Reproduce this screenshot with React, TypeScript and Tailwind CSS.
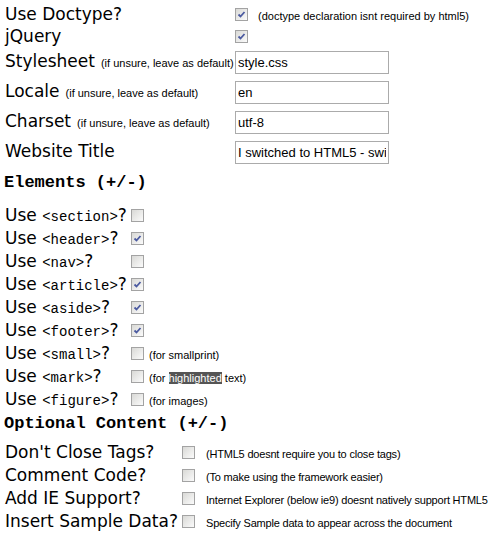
const verdana = "font-['DejaVu_Sans',sans-serif]";
const tahoma = "font-['Liberation_Sans',Arial,sans-serif]";
const mono = "font-['Liberation_Mono','Courier_New',monospace]";

function Box({ checked }: { checked?: boolean }) {
  return (
    <span className="inline-flex h-[13px] w-[13px] shrink-0 items-center justify-center border border-[#a3a3a3] bg-gradient-to-br from-[#d9d9d6] to-[#fbfbfb]">
      {checked && (
        <svg width="9" height="9" viewBox="0 0 9 9">
          <path
            d="M1.5 4.5 L3.5 6.5 L7.5 2"
            fill="none"
            stroke="#4b5aa0"
            strokeWidth="1.8"
          />
        </svg>
      )}
    </span>
  );
}

function Note({ children, tight }: { children: React.ReactNode; tight?: boolean }) {
  return (
    <span
      className={`${tahoma} whitespace-nowrap text-[11px] text-black ${tight ? "tracking-[-0.2px]" : ""}`}
    >
      {children}
    </span>
  );
}

function TextBox({ value }: { value: string }) {
  return (
    <input
      readOnly
      defaultValue={value}
      className={`${tahoma} h-[23px] w-[154px] border border-[#ababab] bg-white px-[2px] text-[13px] text-black outline-none`}
    />
  );
}

const elements = [
  { tag: "<section>", checked: false },
  { tag: "<header>", checked: true },
  { tag: "<nav>", checked: false },
  { tag: "<article>", checked: true },
  { tag: "<aside>", checked: true },
  { tag: "<footer>", checked: true },
  { tag: "<small>", checked: false, note: "(for smallprint)" },
  { tag: "<mark>", checked: false, mark: true },
  { tag: "<figure>", checked: false, note: "(for images)" },
];

const optional = [
  { label: "Don't Close Tags?", note: "(HTML5 doesnt require you to close tags)" },
  { label: "Comment Code?", note: "(To make using the framework easier)" },
  { label: "Add IE Support?", note: "Internet Explorer (below ie9) doesnt natively support HTML5" },
  { label: "Insert Sample Data?", note: "Specify Sample data to appear across the document" },
];

const inputs = [
  { label: "Stylesheet", hint: true, value: "style.css" },
  { label: "Locale", hint: true, value: "en" },
  { label: "Charset", hint: true, value: "utf-8" },
  { label: "Website Title", hint: false, value: "I switched to HTML5 - switchtohtml5.com" },
];

export default function App() {
  return (
    <div className={`${verdana} h-[535px] w-[497px] overflow-hidden bg-white pl-[4px] pt-[3px] text-[17px] text-black`}>
      {/* general */}
      <div className="flex h-[23px] items-center">
        <div className="w-[231px] flex-none pl-[1px]">Use Doctype?</div>
        <Box checked />
        <span className="ml-[10px]">
          <Note>(doctype declaration isnt required by html5)</Note>
        </span>
      </div>
      <div className="flex h-[21px] items-center">
        <div className="w-[231px] flex-none pl-[1px]">jQuery</div>
        <Box checked />
      </div>
      {inputs.map((r) => (
        <div key={r.label} className="flex h-[30px] items-center">
          <div className="flex w-[231px] flex-none items-baseline pl-[1px]">
            <span>{r.label}</span>
            {r.hint && (
              <span className="ml-[6px]">
                <Note>(if unsure, leave as default)</Note>
              </span>
            )}
          </div>
          <TextBox value={r.value} />
        </div>
      ))}

      {/* elements */}
      <div className={`${mono} flex h-[32px] items-center text-[17px] font-bold`}>
        Elements (+/-)
      </div>
      <div className="pt-[5px]">
        {elements.map((e) => (
          <div key={e.tag} className="flex h-[23px] items-center">
            <div className="flex w-[127px] flex-none items-baseline whitespace-nowrap pl-[1px]">
              <span>Use&nbsp;</span>
              <span className={`${mono} text-[14px]`}>{e.tag}</span>
              <span>?</span>
            </div>
            <Box checked={e.checked} />
            {e.note && (
              <span className="ml-[5px]">
                <Note>{e.note}</Note>
              </span>
            )}
            {e.mark && (
              <span className="ml-[5px]">
                <Note>
                  (for <span className="bg-[#555555] text-white">highlighted</span> text)
                </Note>
              </span>
            )}
          </div>
        ))}
      </div>

      {/* optional */}
      <div className={`${mono} flex h-[26px] items-center text-[17px] font-bold`}>
        Optional Content (+/-)
      </div>
      <div className="pt-[4px]">
        {optional.map((o) => (
          <div key={o.label} className="flex h-[23px] items-center">
            <div className="w-[178px] flex-none whitespace-nowrap pl-[1px]">{o.label}</div>
            <Box />
            <span className="ml-[11px]">
              <Note tight>{o.note}</Note>
            </span>
          </div>
        ))}
      </div>
    </div>
  );
}
